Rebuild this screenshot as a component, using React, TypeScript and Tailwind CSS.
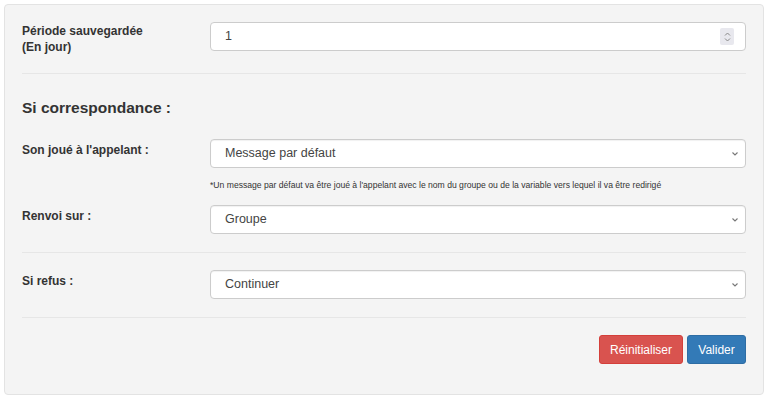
import React from "react";

const font = { fontFamily: '"Liberation Sans", Arial, sans-serif' };

// 셀렉트 오른쪽 화살표
const Chevron = () => (
  <svg width="8" height="6" viewBox="0 0 8 6" className="shrink-0">
    <path d="M1.5 1.5 L4 4 L6.5 1.5" fill="none" stroke="#777" strokeWidth="1.1" />
  </svg>
);

const SelectBox = ({ value }: { value: string }) => (
  <div className="flex-1 h-[29px] flex items-center justify-between bg-white border border-[#cccccc] rounded-[4px] pl-[14px] pr-[6px] text-[12.5px] text-[#444] shadow-[inset_0_1px_1px_rgba(0,0,0,0.06)]">
    <span>{value}</span>
    <Chevron />
  </div>
);

const Label = ({ children }: { children: React.ReactNode }) => (
  <div className="w-[188px] shrink-0 pt-[3px] text-[12px] font-bold leading-[16px] text-[#333]">
    {children}
  </div>
);

const Divider = ({ className = "" }: { className?: string }) => (
  <div className={`h-px bg-[#e6e6e6] ${className}`} />
);

export default function App() {
  return (
    <div className="bg-white w-[768px] h-[399px] p-1" style={font}>
      {/* 패널 */}
      <div className="w-[760px] h-[391px] bg-[#f4f4f4] border border-[#e3e3e3] rounded-[4px] px-[17px] pt-[17px]">
        {/* 저장 기간 */}
        <div className="flex h-[29px]">
          <div className="w-[188px] shrink-0 pt-px text-[12px] font-bold leading-[16px] text-[#333]">
            Période sauvegardée
            <br />
            (En jour)
          </div>
          <div className="flex-1 h-[29px] flex items-center justify-between bg-white border border-[#cccccc] rounded-[4px] pl-[14px] pr-[11px] text-[12.5px] text-[#444]">
            <span>1</span>
            <div className="w-[14px] h-[17px] rounded-[2px] bg-[#e8e8ee] flex flex-col items-center justify-center gap-[2px]">
              <svg width="7" height="4" viewBox="0 0 7 4">
                <path d="M1 3.5 L3.5 1 L6 3.5" fill="none" stroke="#888" strokeWidth="1" />
              </svg>
              <svg width="7" height="4" viewBox="0 0 7 4">
                <path d="M1 0.5 L3.5 3 L6 0.5" fill="none" stroke="#888" strokeWidth="1" />
              </svg>
            </div>
          </div>
        </div>

        <Divider className="mt-[22px]" />

        <h4 className="mt-[24px] h-[20px] leading-[20px] text-[15.5px] font-bold text-[#333]">
          Si correspondance :
        </h4>

        <div className="flex mt-[21px]">
          <Label>Son joué à l'appelant :</Label>
          <SelectBox value="Message par défaut" />
        </div>
        <p className="ml-[188px] mt-[12px] h-[11px] leading-[11px] text-[8.6px] text-[#333] whitespace-nowrap">
          *Un message par défaut va être joué à l'appelant avec le nom du groupe ou de la variable vers lequel il va être redirigé
        </p>

        <div className="flex mt-[14px]">
          <Label>Renvoi sur :</Label>
          <SelectBox value="Groupe" />
        </div>

        <Divider className="mt-[18px]" />

        <div className="flex mt-[17px]">
          <Label>Si refus :</Label>
          <SelectBox value="Continuer" />
        </div>

        <Divider className="mt-[18px]" />

        {/* 버튼 */}
        <div className="flex justify-end gap-[4px] mt-[17px]">
          <button className="h-[29px] w-[84px] rounded-[3px] bg-[#d9534f] border border-[#d43f3a] text-white text-[12px]">
            Réinitialiser
          </button>
          <button className="h-[29px] w-[59px] rounded-[3px] bg-[#337ab7] border border-[#2e6da4] text-white text-[12px]">
            Valider
          </button>
        </div>
      </div>
    </div>
  );
}
